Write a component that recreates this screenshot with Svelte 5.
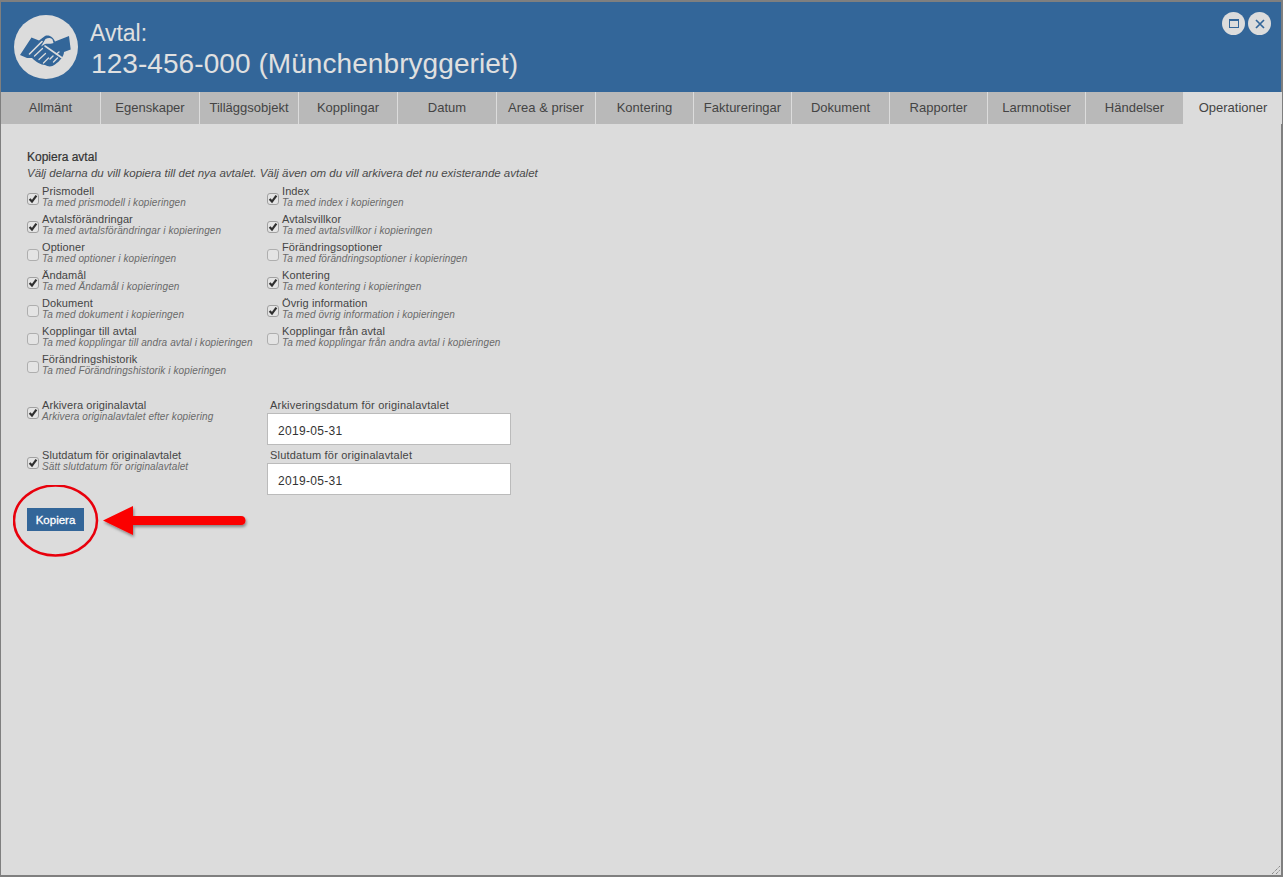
<script>
  const tabs = ['Allmänt','Egenskaper','Tilläggsobjekt','Kopplingar','Datum','Area & priser','Kontering','Faktureringar','Dokument','Rapporter','Larmnotiser','Händelser','Operationer'];
  const opts = [
    ['Prismodell','Ta med prismodell i kopieringen',true,'Index','Ta med index i kopieringen',true],
    ['Avtalsförändringar','Ta med avtalsförändringar i kopieringen',true,'Avtalsvillkor','Ta med avtalsvillkor i kopieringen',true],
    ['Optioner','Ta med optioner i kopieringen',false,'Förändringsoptioner','Ta med förändringsoptioner i kopieringen',false],
    ['Ändamål','Ta med Ändamål i kopieringen',true,'Kontering','Ta med kontering i kopieringen',true],
    ['Dokument','Ta med dokument i kopieringen',false,'Övrig information','Ta med övrig information i kopieringen',true],
    ['Kopplingar till avtal','Ta med kopplingar till andra avtal i kopieringen',false,'Kopplingar från avtal','Ta med kopplingar från andra avtal i kopieringen',false],
    ['Förändringshistorik','Ta med Förändringshistorik i kopieringen',false]
  ];
  const dates = [
    ['Arkivera originalavtal','Arkivera originalavtalet efter kopiering','Arkiveringsdatum för originalavtalet'],
    ['Slutdatum för originalavtalet','Sätt slutdatum för originalavtalet','Slutdatum för originalavtalet']
  ];
</script>

{#snippet check(title, sub, on)}
  <div class="opt">
    <span class="box" class:on>
      {#if on}
        <svg viewBox="0 0 10 10" width="10" height="10"><path d="M1.6 5 L4 7.6 L8.4 1.6" fill="none" stroke="#2f2f2f" stroke-width="2.2"/></svg>
      {/if}
    </span>
    <div class="opt-text">
      <div class="opt-title">{title}</div>
      <div class="opt-sub">{sub}</div>
    </div>
  </div>
{/snippet}

<div class="window">
  <header>
    <div class="logo">
      <svg viewBox="0 0 64 64" width="64" height="64">
        <path fill="#336699" d="M17.5 22.5 L25 25.5 L31 21 C34 20 38 20.5 41 26.5 L55 21 L56.7 34.5 L50 37 C50 41 46 46 41 49.5 C38 52 34 52 31 50 C27 50 22 47 18 43 L13 43 L6 40 Z"/>
        <path fill="#dcdcdc" d="M31.5 24 C34 22.5 37 22.5 38.5 24.5 L39.5 28 C37 29.5 33.5 28 31 29 L27 31.5 Z"/>
        <g fill="none" stroke="#dcdcdc" stroke-linejoin="round" stroke-linecap="round">
          <path stroke-width="1.6" d="M15.5 39 L28 26.5 M31 31 L47.5 42.5"/>
          <path stroke-width="1.3" d="M20.5 41 L28.5 33.5 M25 44.5 L31.5 38.5 M29.5 48 L34.5 43"/>
          <path stroke-width="1.4" d="M36 44 L39 41 M39.5 47 L43.5 43 M42.5 39 L45 37"/>
        </g>
      </svg>
    </div>
    <div class="titles">
      <div class="t1">Avtal:</div>
      <div class="t2">123-456-000 (Münchenbryggeriet)</div>
    </div>
    <div class="controls">
      <button class="ctl" aria-label="Maximera">
        <svg viewBox="0 0 10 9" width="10" height="9"><rect x="0.5" y="0.5" width="9" height="8" fill="none" stroke="#336699" stroke-width="1"/><rect x="0" y="0" width="10" height="2" fill="#336699"/></svg>
      </button>
      <button class="ctl" aria-label="Stäng">
        <svg viewBox="0 0 10 10" width="10" height="10"><path d="M1 1 L9 9 M9 1 L1 9" stroke="#336699" stroke-width="1.7"/></svg>
      </button>
    </div>
  </header>

  <nav>
    {#each tabs as t, i}
      <div class="tab" class:active={i === tabs.length - 1}>{t}</div>
    {/each}
  </nav>

  <main>
    <h1>Kopiera avtal</h1>
    <p class="lead">Välj delarna du vill kopiera till det nya avtalet. Välj även om du vill arkivera det nu existerande avtalet</p>

    <div class="grid">
      {#each opts as o}
        {@render check(o[0], o[1], o[2])}
        {#if o[3]}
          {@render check(o[3], o[4], o[5])}
        {:else}
          <div></div>
        {/if}
      {/each}
    </div>

    <div class="dates">
      {#each dates as d}
        <div class="date-row">
          {@render check(d[0], d[1], true)}
          <div class="field">
            <div class="field-label">{d[2]}</div>
            <div class="input">2019-05-31</div>
          </div>
        </div>
      {/each}
    </div>

    <div class="action">
      <button class="primary">Kopiera</button>
      <svg class="annot" viewBox="0 0 250 75" width="250" height="75">
        <defs>
          <filter id="sh" x="-10%" y="-30%" width="120%" height="170%">
            <feDropShadow dx="1" dy="2" stdDeviation="1.5" flood-color="#000" flood-opacity="0.4"/>
          </filter>
        </defs>
        <ellipse cx="42.5" cy="35.5" rx="41.5" ry="35" fill="none" stroke="#e8000c" stroke-width="2.5"/>
        <path filter="url(#sh)" fill="#fb0000" d="M90 35.5 L120 21 L120 31 L228 31 C231 31 232.5 33 232.5 35.5 C232.5 38 231 40 228 40 L120 40 L120 50 Z"/>
      </svg>
    </div>

    <svg class="grip" viewBox="0 0 8 8" width="8" height="8"><path d="M0 8 L8 0 M4 8 L8 4" stroke="#666" stroke-width="1" stroke-dasharray="1 1"/></svg>
  </main>
</div>

<style>
  :global(body) { margin: 0; background: #dcdcdc; }
  .window {
    width: 1283px; height: 877px; box-sizing: border-box;
    border: solid #7f7f7f; border-width: 2px 2px 2px 1px;
    display: flex; flex-direction: column;
    font-family: "Liberation Sans", Arial, sans-serif; color: #333;
    background: #dcdcdc;
  }
  header {
    height: 90px; flex: none; background: #336699; display: flex; box-sizing: border-box;
    padding: 13px 10px 0 13px; position: relative;
  }
  .logo { width: 64px; height: 64px; border-radius: 50%; background: #dcdcdc; flex: none; }
  .logo svg { display: block; }
  .titles { margin-left: 12px; margin-top: 5px; color: #e0e0e0; }
  .t1 { font-size: 23px; line-height: 26px; }
  .t2 { font-size: 28px; line-height: 32px; margin-top: 2px; padding-left: 1px; letter-spacing: 0.07px; }
  .controls { margin-left: auto; display: flex; gap: 3px; margin-top: -3px; height: 23px; }
  .ctl {
    width: 23px; height: 23px; border-radius: 50%; border: 0; padding: 0; background: #dcdcdc;
    display: flex; align-items: center; justify-content: center;
  }
  nav { height: 32px; flex: none; display: flex; background: #dcdcdc; }
  .tab {
    width: 97px; margin-right: 1px; background: #b9b9b9; flex: none;
    display: flex; align-items: center; justify-content: center; font-size: 13px; color: #444;
    padding-bottom: 1px; box-sizing: border-box; white-space: nowrap;
  }
  .tab:nth-child(-n+6) { width: 98px; }
  .tab:nth-child(1) { width: 99px; }
  .tab.active { background: #dcdcdc; color: #444; width: 98px; margin-right: 0; }
  main { flex: 1; position: relative; padding: 26px 0 0 26px; background: #dcdcdc; }
  h1 { font-size: 12px; font-weight: 400; margin: 0; line-height: 14px; color: #333; -webkit-text-stroke: 0.2px #333; }
  .lead { margin: 2px 0 0; font-size: 11.5px; line-height: 15px; font-style: italic; color: #4a4a4a; }
  .grid { display: grid; grid-template-columns: 240px 1fr; grid-auto-rows: 28px; margin-top: 5px; }
  .opt { display: flex; align-items: flex-start; }
  .box {
    width: 10px; height: 10px; margin: 7px 3px 0 0; flex: none;
    border: 1px solid #aeaeae; border-radius: 3px; background: #e4e4e4;
    display: block;
  }
  .box.on { border-color: #a0a0a0; }
  .box svg { display: block; }
  .opt-title { font-size: 11px; line-height: 12px; color: #444; letter-spacing: 0.1px; white-space: nowrap; margin-top: -1px; }
  .opt-sub { font-size: 10px; line-height: 10px; margin-top: 1px; font-style: italic; color: #6a6a6a; white-space: nowrap; letter-spacing: 0.1px; }
  .dates { margin-top: 18px; }
  .date-row { display: grid; grid-template-columns: 240px 1fr; height: 50px; }
  .field { margin-top: -1px; }
  .field-label { font-size: 11px; line-height: 13px; color: #444; letter-spacing: 0.2px; padding-left: 3px; }
  .input {
    width: 244px; height: 32px; box-sizing: border-box; border: 1px solid #bbb; background: #fff; margin-top: 1px;
    padding-left: 10px; font-size: 12px; letter-spacing: 0.3px; line-height: 34px; color: #333;
  }
  .action { position: relative; margin-top: 8px; }
  .primary {
    width: 57px; height: 23px; background: #336699; border: 0; color: #fff; padding: 0;
    font: 400 11.5px "Liberation Sans", Arial, sans-serif; -webkit-text-stroke: 0.3px #fff; display: block;
  }
  .annot { position: absolute; left: -14px; top: -23px; }
  .grip { position: absolute; right: 1px; bottom: 1px; }
</style>
